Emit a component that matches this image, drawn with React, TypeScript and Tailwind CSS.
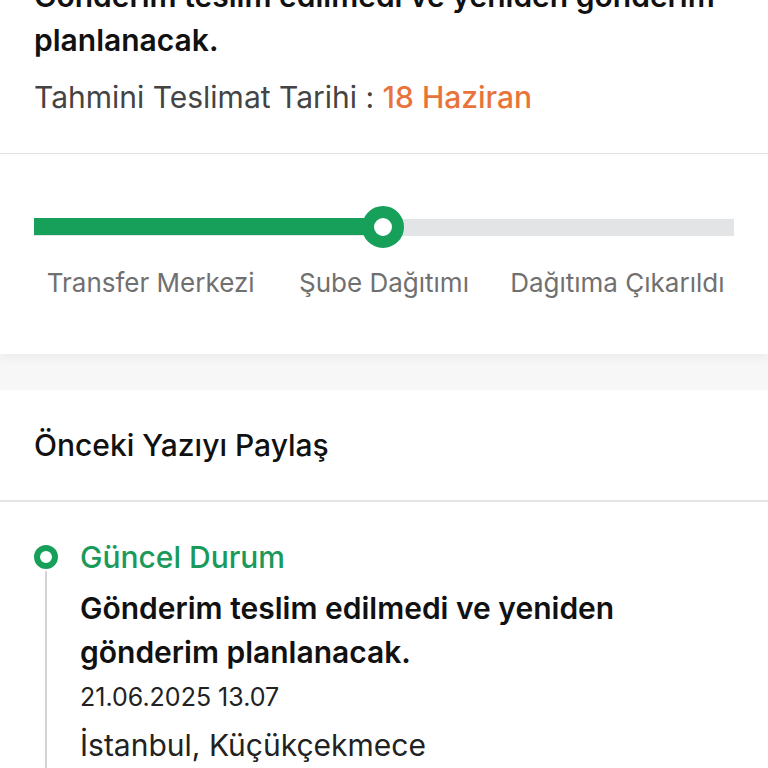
const font = { fontFamily: 'Inter, "Noto Sans", sans-serif' };

const steps = ['Transfer Merkezi', 'Şube Dağıtımı', 'Dağıtıma Çıkarıldı'];

export default function App() {
  return (
    <div className="w-[768px] h-[768px] overflow-hidden bg-white" style={font}>
      {/* Summary */}
      <div className="-mt-[26px] px-[34px] pb-[34px]">
        <p className="text-[30px] leading-[44px] font-semibold text-[#111111]">
          Gönderim teslim edilmedi ve yeniden gönderim planlanacak.
        </p>
        <p className="mt-[13px] text-[30px] leading-[44px] text-[#444444]">
          Tahmini Teslimat Tarihi : <span className="font-medium text-[#e8743b]">18 Haziran</span>
        </p>
      </div>
      <div className="h-px bg-[#e4e4e4]" />

      {/* Progress */}
      <div className="bg-white px-[34px] pt-[51px] pb-[55px] shadow-[0_4px_10px_rgba(0,0,0,0.05)] relative">
        <div className="relative h-[44px] flex items-center">
          <div className="h-[17px] w-full bg-[#e3e4e6]" />
          <div className="absolute left-0 top-[13px] h-[17px] w-[349px] bg-[#16a05a]" />
          <div className="absolute left-[328px] top-[1px] w-[42px] h-[42px] rounded-full border-[12px] border-[#16a05a] bg-white" />
        </div>
        <div className="mt-[18px] grid grid-cols-3 text-center text-[26px] leading-[32px] text-[#707070]">
          {steps.map((s) => (
            <span key={s}>{s}</span>
          ))}
        </div>
      </div>
      <div className="h-[36px] bg-[#f7f7f7]" />

      {/* History */}
      <div className="bg-white">
        <div className="px-[34px] h-[110px] flex items-center">
          <h2 className="text-[30px] font-medium text-[#111111]">Önceki Yazıyı Paylaş</h2>
        </div>
        <div className="h-[2px] bg-[#e4e4e4]" />
        <div className="px-[34px] pt-[43px] flex gap-[22px]">
          <div className="flex flex-col items-center w-[24px] shrink-0">
            <div className="w-[24px] h-[24px] rounded-full border-[6px] border-[#16a05a] bg-white" />
            <div className="w-[2px] h-[300px] mt-[2px] bg-[#d4d4d4]" />
          </div>
          <div className="-mt-[10px]">
            <p className="text-[30px] leading-[44px] font-medium text-[#1a9a5a]">Güncel Durum</p>
            <p className="mt-[7px] text-[30px] leading-[44px] font-semibold text-[#111111]">
              Gönderim teslim edilmedi ve yeniden
              <br />
              gönderim planlanacak.
            </p>
            <p className="mt-[1px] text-[25px] leading-[44px] text-[#222222]">21.06.2025 13.07</p>
            <p className="mt-[4px] text-[30px] leading-[44px] text-[#222222]">İstanbul, Küçükçekmece</p>
          </div>
        </div>
      </div>
    </div>
  );
}
